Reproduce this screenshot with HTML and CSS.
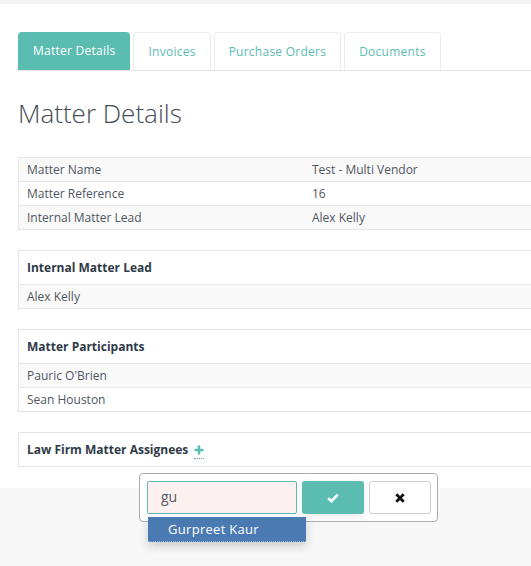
FILE: index.html
```html
<!DOCTYPE html>
<html>
<head>
<meta charset="utf-8">
<link rel="stylesheet" href="styles.css">
</head>
<body>
<div class="topbar"></div>
<div class="page">
  <div class="tabs">
    <div class="tab active">Matter Details</div>
    <div class="tab">Invoices</div>
    <div class="tab">Purchase Orders</div>
    <div class="tab">Documents</div>
  </div>
  <h1 class="title">Matter Details</h1>
  <table class="details">
    <tr class="odd"><td class="label">Matter Name</td><td>Test - Multi Vendor</td></tr>
    <tr><td class="label">Matter Reference</td><td>16</td></tr>
    <tr class="odd"><td class="label">Internal Matter Lead</td><td>Alex Kelly</td></tr>
  </table>
  <div class="panel">
    <div class="panel-head">Internal Matter Lead</div>
    <div class="panel-row odd">Alex Kelly</div>
  </div>
  <div class="panel">
    <div class="panel-head">Matter Participants</div>
    <div class="panel-row odd">Pauric O'Brien</div>
    <div class="panel-row">Sean Houston</div>
  </div>
  <div class="panel-wrap">
    <div class="panel last">
      <div class="panel-head">Law Firm Matter Assignees <span class="add"><svg width="10" height="10" viewBox="0 0 10 10"><path d="M5 0.5V9.5M0.5 5H9.5" stroke="#5bbcb2" stroke-width="2.6"/></svg></span></div>
    </div>
    <div class="popover">
      <div class="pop-input">gu</div>
      <div class="btn ok"><svg width="12" height="10" viewBox="0 0 12 10"><path d="M1.2 5.2L4.4 8.2L10.8 1.6" fill="none" stroke="#fff" stroke-width="2.6"/></svg></div>
      <div class="btn cancel"><svg width="10" height="10" viewBox="0 0 10 10"><path d="M1.3 1.3L8.7 8.7M8.7 1.3L1.3 8.7" stroke="#111" stroke-width="2.8"/></svg></div>
      <div class="suggest">Gurpreet Kaur</div>
    </div>
  </div>
</div>
<div class="bottom"></div>
</body>
</html>
```

FILE: styles.css
```css
html, body {
  margin: 0;
  padding: 0;
  overflow: hidden;
  background: #ffffff;
  font-family: "Open Sans", "Liberation Sans", sans-serif;
  color: #4f5661;
}
.topbar {
  height: 4px;
  background: #f2f2f2;
}
.page {
  width: 513px;
  padding: 28px 0 0 18px;
}
.tabs {
  display: flex;
  gap: 3px;
  border-bottom: 1px solid #e6e6e6;
  height: 38px;
}
.tab {
  height: 38px;
  box-sizing: border-box;
  padding: 0 14px;
  border: 1px solid #ececec;
  border-bottom: none;
  border-radius: 4px 4px 0 0;
  color: #5bbcb2;
  font-size: 12px;
  letter-spacing: 0.25px;
  line-height: 37px;
}
.tab.active {
  background: #5bbcb2;
  border-color: #5bbcb2;
  color: #ffffff;
  line-height: 35px;
  padding: 0 14px;
}
.title {
  margin: 24px 0 26px;
  font-size: 26px;
  font-weight: 300;
  line-height: 36px;
  color: #454c56;
}
.details {
  width: 100%;
  border-collapse: collapse;
  border-left: 1px solid #e6e6e6;
  border-bottom: 1px solid #e6e6e6;
  font-size: 12px;
}
.details td {
  border-top: 1px solid #e6e6e6;
  height: 23px;
  padding: 0 8px;
  line-height: 16px;
}
.details td.label {
  width: 269px;
}
.odd {
  background: #f9f9f9;
}
.panel {
  margin-top: 20px;
  border: 1px solid #e4e4e4;
  border-right: none;
  font-size: 12px;
}
.panel-head {
  height: 33px;
  display: flex;
  align-items: center;
  gap: 6px;
  padding: 0 8px;
  font-weight: 700;
  color: #2f3a47;
}
.panel-row {
  height: 23px;
  line-height: 23px;
  padding: 0 8px;
  border-top: 1px solid #e6e6e6;
}
.add {
  display: flex;
  padding-bottom: 3px;
  border-bottom: 1px dotted #6c9fd6;
  margin-top: 4px;
}
.panel-wrap {
  position: relative;
}
.popover {
  position: absolute;
  left: 121px;
  top: 41px;
  width: 299px;
  box-sizing: border-box;
  display: flex;
  gap: 5px;
  padding: 7px 6px 7px 7px;
  background: #ffffff;
  border: 1px solid #acacac;
  border-radius: 4px;
  z-index: 2;
}
.pop-input {
  width: 150px;
  height: 33px;
  box-sizing: border-box;
  border: 1px solid #5bbcb2;
  border-radius: 2px;
  background: #fdf0f0;
  padding: 0 13px;
  line-height: 30px;
  font-size: 14px;
  color: #555b63;
}
.btn {
  width: 62px;
  height: 33px;
  box-sizing: border-box;
  border-radius: 3px;
  display: flex;
  align-items: center;
  justify-content: center;
}
.btn.ok {
  background: #5bbcb2;
  box-shadow: 0 3px 8px rgba(0,0,0,0.08);
}
.btn.cancel {
  background: #ffffff;
  border: 1px solid #cfcfcf;
}
.suggest {
  position: absolute;
  left: 8px;
  top: 43px;
  width: 158px;
  height: 25px;
  box-sizing: border-box;
  background: #4a7ab2;
  border-bottom: 1px dotted #8fb0d8;
  color: #ffffff;
  font-size: 13px;
  letter-spacing: 0.3px;
  line-height: 24px;
  padding-left: 20px;
  box-shadow: 0 4px 10px rgba(0,0,0,0.18);
}
.bottom {
  margin-top: 21px;
  height: 79px;
  background: #f7f7f7;
}
```
